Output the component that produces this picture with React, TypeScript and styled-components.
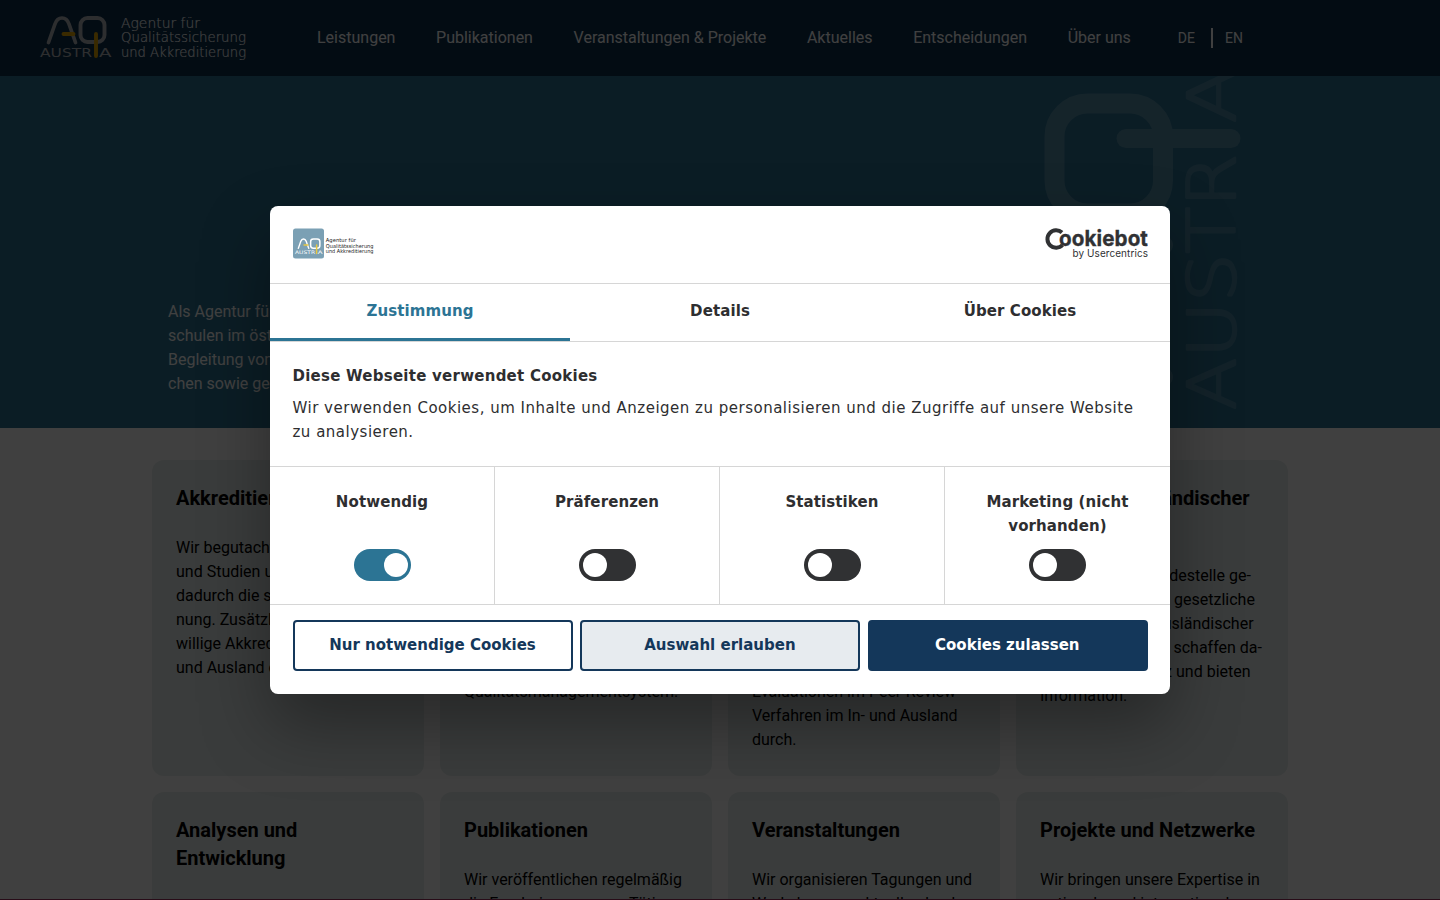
import React from 'react';
import styled, { createGlobalStyle } from 'styled-components';

const GlobalStyle = createGlobalStyle`
  * { box-sizing: border-box; }
  body { margin: 0; background: #fff; overflow: hidden; }
  h1, h2, h3, p { margin: 0; }
  button { font: inherit; }
`;

const Page = styled.div`
  position: relative;
  height: 900px;
  overflow: hidden;
  background: #fff;
  color: #000;
  font-family: Roboto, sans-serif;
  font-size: 16px;
  line-height: 24px;
`;

const Header = styled.header`
  display: flex;
  align-items: center;
  height: 76px;
  padding-left: 36px;
  background: #0c304e;
  color: #fff;
`;

const Nav = styled.nav`
  display: flex;
  gap: 40.600px;
  margin-left: 66px;
`;

const NavLink = styled.a`
  white-space: nowrap;
`;

const Languages = styled.div`
  display: flex;
  align-items: center;
  margin-left: 47px;
  font-size: 14px;
  line-height: 20px;
`;

const Language = styled.a<{ $divided?: boolean }>`
  padding-right: ${p => (p.$divided ? '16px' : '0')};
  margin-right: ${p => (p.$divided ? '12px' : '0')};
  border-right: ${p => (p.$divided ? '2px solid #fff' : '0')};
`;

const Hero = styled.section`
  position: relative;
  height: 352px;
  padding: 224px 168px 0;
  background: #2c7494;
  color: #fff;
  overflow: hidden;
`;

const Watermark = styled.svg`
  position: absolute;
  top: 0;
  left: 1030px;
`;

const Cards = styled.main`
  display: grid;
  grid-template-columns: repeat(4, 272px);
  grid-auto-rows: 316px;
  gap: 16px;
  justify-content: center;
  padding-top: 32px;
`;

const Card = styled.article`
  display: flex;
  flex-direction: column;
  gap: 24px;
  padding: 24px;
  border-radius: 12px;
  background: #e8efed;
`;

const CardTitle = styled.h2`
  font-size: 20px;
  font-weight: 700;
  line-height: 28px;
  white-space: pre;
`;

const Lines = styled.p`
  white-space: pre;
`;

const BottomRule = styled.div`
  position: absolute;
  inset: auto 0 0;
  height: 1px;
  background: #a03060;
`;

const Backdrop = styled.div`
  position: absolute;
  inset: 0;
  display: flex;
  align-items: center;
  justify-content: center;
  background: rgba(0, 0, 0, 0.75);
`;

const Dialog = styled.div`
  display: flex;
  flex-direction: column;
  width: 900px;
  height: 488px;
  border-radius: 8px;
  overflow: hidden;
  background: #fff;
  color: #2e2e30;
  box-shadow: 0 32px 68px rgba(0, 0, 0, 0.35);
  font-family: 'DejaVu Sans', sans-serif;
  font-size: 15px;
  line-height: 24px;
  letter-spacing: 0.1px;
`;

const DialogHeader = styled.div`
  display: flex;
  align-items: center;
  justify-content: space-between;
  height: 77px;
  padding: 0 22px 1px 23px;
`;

const Tabs = styled.div`
  display: grid;
  grid-template-columns: repeat(3, 1fr);
  height: 59px;
  border-top: 1px solid #d6d6d6;
  border-bottom: 1px solid #d6d6d6;
`;

const Tab = styled.button<{ $active?: boolean }>`
  padding: 0 0 4px;
  border: 0;
  background: none;
  box-shadow: ${p => (p.$active ? 'inset 0 -3px #2c7494' : 'none')};
  color: ${p => (p.$active ? '#2c7494' : '#2e2e30')};
  font-weight: 700;
  letter-spacing: inherit;
`;

const Intro = styled.div`
  height: 124px;
  padding: 22px 22px 0 22.500px;
`;

const IntroTitle = styled.h2`
  margin-bottom: 8px;
  font-size: 15px;
  line-height: 24px;
  letter-spacing: 0.25px;
`;

const IntroText = styled.p`
  letter-spacing: 0.5px;
`;

const Categories = styled.div`
  display: grid;
  grid-template-columns: repeat(4, 1fr);
  height: 139px;
  border-top: 1px solid #d6d6d6;
  border-bottom: 1px solid #d6d6d6;
`;

const Category = styled.div`
  display: flex;
  flex-direction: column;
  align-items: center;
  justify-content: space-between;
  padding: 23px 30px;
  border-right: 1px solid #d6d6d6;
  font-weight: 700;
  text-align: center;
  &:last-child { border-right: 0; }
`;

const Toggle = styled.span<{ $on?: boolean }>`
  display: flex;
  align-items: center;
  justify-content: ${p => (p.$on ? 'flex-end' : 'flex-start')};
  flex: none;
  width: 57px;
  height: 32px;
  padding: 0 3px 0 4px;
  border-radius: 16px;
  background: ${p => (p.$on ? '#2c7494' : '#303133')};
  &::after {
    content: '';
    width: 24px;
    height: 24px;
    border-radius: 50%;
    background: #fff;
  }
`;

const Actions = styled.div`
  display: grid;
  grid-template-columns: repeat(3, 280px);
  gap: 7.400px;
  padding: 15px 22px 0 23px;
`;

const Action = styled.button<{ $tone: 'plain' | 'tint' | 'solid' }>`
  height: 51px;
  padding: 0 1px 2px 0;
  border: 2px solid #14375a;
  border-radius: 4px;
  background: ${p => ({ plain: '#fff', tint: '#e7ebef', solid: '#14375a' })[p.$tone]};
  color: ${p => (p.$tone === 'solid' ? '#fff' : '#14375a')};
  font-weight: 700;
  letter-spacing: 0;
`;

const AgencyMark = ({ ink, accent }: { ink: string; accent: string }) => (
  <g fill="none" strokeLinecap="round">
    <path d="M12.500 42.500 19 24Q21 18 26 18Q31 18 33 24L39.500 42.500" stroke={ink} strokeWidth="3.700" />
    <rect x="44.500" y="18" width="24" height="24" rx="7" stroke={ink} strokeWidth="3.900" />
    <path d="M27.500 34H37.500M60 34V56" stroke={accent} strokeWidth="3.900" />
    <g fill={ink} fontFamily="'DejaVu Sans', sans-serif" fontSize="12.500">
      <text x="4" y="57" textLength="52" lengthAdjust="spacingAndGlyphs">AUSTR</text>
      <text x="63" y="57" textLength="12.500" lengthAdjust="spacingAndGlyphs">A</text>
    </g>
  </g>
);

const AgencyName = ({ ink, size, weight }: { ink: string; size: number; weight: number }) => (
  <g fill={ink} fontFamily="'DejaVu Sans', sans-serif" fontSize={size} fontWeight={weight}>
    <text x="85" y="27.500" textLength="79" lengthAdjust="spacingAndGlyphs">Agentur für</text>
    <text x="85" y="42" textLength="125" lengthAdjust="spacingAndGlyphs">Qualitätssicherung</text>
    <text x="85" y="56.500" textLength="125" lengthAdjust="spacingAndGlyphs">und Akkreditierung</text>
  </g>
);

const HeaderLogo = () => (
  <svg width="215" height="76" viewBox="0 0 215 76">
    <AgencyMark ink="#b4b8bc" accent="#e8a800" />
    <g stroke="#fff" strokeWidth="0.150">
      <AgencyName ink="#ffffff" size={13.5} weight={200} />
    </g>
  </svg>
);

const DialogLogo = () => (
  <svg width="84" height="32" viewBox="0 0 84 32">
    <rect y="0.500" width="31" height="30" rx="2.500" fill="#7ba0b4" />
    <g transform="translate(0.500 4) scale(0.385)">
      <AgencyMark ink="#ffffff" accent="#e8c840" />
    </g>
    <g transform="translate(0.300 3.800) scale(0.382)">
      <AgencyName ink="#222222" size={14} weight={400} />
    </g>
  </svg>
);

const CookiebotLogo = () => (
  <svg width="104" height="34" viewBox="0 0 104 34">
    <path d="M18 5.600A8.700 8.700 0 1 0 18.500 18" fill="none" stroke="#303133" strokeWidth="4" />
    <g fill="#303133">
      <text x="15" y="18.500" fontFamily="Inter, sans-serif" fontSize="22" fontWeight="700" textLength="89" lengthAdjust="spacingAndGlyphs" stroke="#303133" strokeWidth="0.350">ookiebot</text>
      <text x="28.500" y="29.500" fontFamily="Inter, sans-serif" fontSize="10.500" textLength="75.500" lengthAdjust="spacingAndGlyphs">by Usercentrics</text>
    </g>
  </svg>
);

const HeroWatermark = () => (
  <Watermark width="220" height="352" viewBox="1030 76 220 352">
    <g opacity="0.190" fill="none" stroke="#fff" strokeLinecap="round">
      <rect x="1054.500" y="103.500" width="108.500" height="110" rx="33" strokeWidth="20" />
      <path d="M1126 138.500H1231" strokeWidth="19" />
      <path d="M1163 245 1080 275Q1054 290 1054 310T1080 345L1163 377" strokeWidth="20" />
    </g>
    <g opacity="0.150" fill="#fff" stroke="#fff" strokeWidth="2.500" strokeLinejoin="round" fontFamily="'DejaVu Sans', sans-serif" fontSize="66" fontWeight="200" transform="translate(1235 410) rotate(-90)">
      <text textLength="256" lengthAdjust="spacingAndGlyphs">AUSTR</text>
      <text x="287" textLength="56" lengthAdjust="spacingAndGlyphs">A</text>
    </g>
  </Watermark>
);

const navItems = ['Leistungen', 'Publikationen', 'Veranstaltungen & Projekte', 'Aktuelles', 'Entscheidungen', 'Über uns'];

const heroText = `Als Agentur für Qualitätssicherung und Akkreditierung begleiten wir Hoch-
schulen im österreichischen Hochschulraum bei der Entwicklung und
Begleitung von Qualitätssicherung. Wir akkreditieren, beraten und ma-
chen sowie gestalten Verfahren nach europäischen Standards.`;

const cards = [
  { title: 'Akkreditierung', text: 'Wir begutachten Hochschulen\nund Studien und sichern\ndadurch die staatliche Anerken-\nnung. Zusätzlich führen wir frei-\nwillige Akkreditierungen im In-\nund Ausland durch.' },
  { title: 'Audit', text: 'Wir zertifizieren Hochschulen\nim In- und Ausland. In unseren\nVerfahren unterstützen wir die\nEntwicklung von Qualität und\nbegleiten Hochschulen bei der\nWeiterentwicklung für ihr\nQualitätsmanagementsystem.' },
  { title: 'Beratung', text: 'Wir beraten Hochschulen bei\nder Entwicklung und Umsetzung\nihrer Qualitätssicherung. Wir\nbegleiten Projekte und bieten\nunsere Expertise an. Zusätzlich\nführen wir unabhängige\nEvaluationen im Peer-Review-\nVerfahren im In- und Ausland\ndurch.' },
  { title: 'Meldung ausländischer\nStudien', text: 'Wir wirken als Meldestelle ge-\ngenüber, beachten gesetzliche\nVorgaben vieler ausländischer\nStudiengänge. Wir schaffen da-\ndurch Transparenz und bieten\nInformation.' },
  { title: 'Analysen und\nEntwicklung', text: 'Wir analysieren Themen der' },
  { title: 'Publikationen', text: 'Wir veröffentlichen regelmäßig\ndie Ergebnisse unserer Tätig-' },
  { title: 'Veranstaltungen', text: 'Wir organisieren Tagungen und\nWorkshops zu aktuellen hoch-' },
  { title: 'Projekte und Netzwerke', text: 'Wir bringen unsere Expertise in\nnationale und internationale' },
];

export default function App() {
  return (
    <Page>
      <GlobalStyle />
      <Header>
        <HeaderLogo />
        <Nav>{navItems.map(n => <NavLink key={n}>{n}</NavLink>)}</Nav>
        <Languages>
          <Language $divided>DE</Language>
          <Language>EN</Language>
        </Languages>
      </Header>
      <Hero>
        <HeroWatermark />
        <Lines>{heroText}</Lines>
      </Hero>
      <Cards>
        {cards.map(c => (
          <Card key={c.title}>
            <CardTitle>{c.title}</CardTitle>
            <Lines>{c.text}</Lines>
          </Card>
        ))}
      </Cards>
      <BottomRule />
      <Backdrop>
        <Dialog role="dialog">
          <DialogHeader>
            <DialogLogo />
            <CookiebotLogo />
          </DialogHeader>
          <Tabs>
            <Tab $active>Zustimmung</Tab>
            <Tab>Details</Tab>
            <Tab>Über Cookies</Tab>
          </Tabs>
          <Intro>
            <IntroTitle>Diese Webseite verwendet Cookies</IntroTitle>
            <IntroText>Wir verwenden Cookies, um Inhalte und Anzeigen zu personalisieren und die Zugriffe auf unsere Website zu analysieren.</IntroText>
          </Intro>
          <Categories>
            <Category>Notwendig<Toggle $on /></Category>
            <Category>Präferenzen<Toggle /></Category>
            <Category>Statistiken<Toggle /></Category>
            <Category>Marketing (nicht vorhanden)<Toggle /></Category>
          </Categories>
          <Actions>
            <Action $tone="plain">Nur notwendige Cookies</Action>
            <Action $tone="tint">Auswahl erlauben</Action>
            <Action $tone="solid">Cookies zulassen</Action>
          </Actions>
        </Dialog>
      </Backdrop>
    </Page>
  );
}
